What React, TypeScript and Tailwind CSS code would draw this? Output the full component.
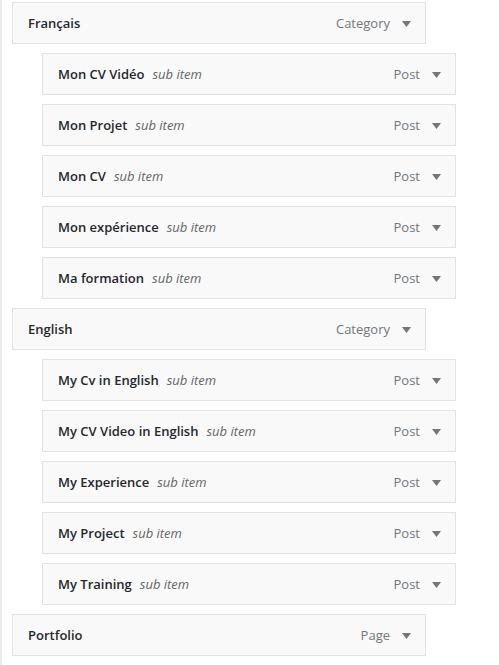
const items: { title: string; type: string; sub: boolean }[] = [
  { title: "Français", type: "Category", sub: false },
  { title: "Mon CV Vidéo", type: "Post", sub: true },
  { title: "Mon Projet", type: "Post", sub: true },
  { title: "Mon CV", type: "Post", sub: true },
  { title: "Mon expérience", type: "Post", sub: true },
  { title: "Ma formation", type: "Post", sub: true },
  { title: "English", type: "Category", sub: false },
  { title: "My Cv in English", type: "Post", sub: true },
  { title: "My CV Video in English", type: "Post", sub: true },
  { title: "My Experience", type: "Post", sub: true },
  { title: "My Project", type: "Post", sub: true },
  { title: "My Training", type: "Post", sub: true },
  { title: "Portfolio", type: "Page", sub: false },
];

const Arrow = () => (
  <svg width="9" height="6" viewBox="0 0 9 6" className="ml-[12px]">
    <path d="M0 0 H9 L4.5 6 Z" fill="#72777c" />
  </svg>
);

export default function App() {
  return (
    <div className="min-h-[665px] bg-white border-l-2 border-[#ececec] pt-[2px] pl-[10px] font-['Open_Sans',sans-serif] text-[13px]">
      <ul className="flex flex-col gap-[9px]">
        {items.map((it) => (
          <li
            key={it.title}
            className={`${it.sub ? "ml-[30px]" : ""} w-[414px] h-[42px] flex items-center border border-[#e2e2e2] bg-[#f9f9f9] pl-[15px] pr-[14px] pt-[2px]`}
          >
            <span className="font-[550] text-[#23282d]">{it.title}</span>
            {it.sub && <span className="ml-[8px] italic text-[#666]">sub item</span>}
            <span className="ml-auto text-[#72777c]">{it.type}</span>
            <Arrow />
          </li>
        ))}
      </ul>
    </div>
  );
}
